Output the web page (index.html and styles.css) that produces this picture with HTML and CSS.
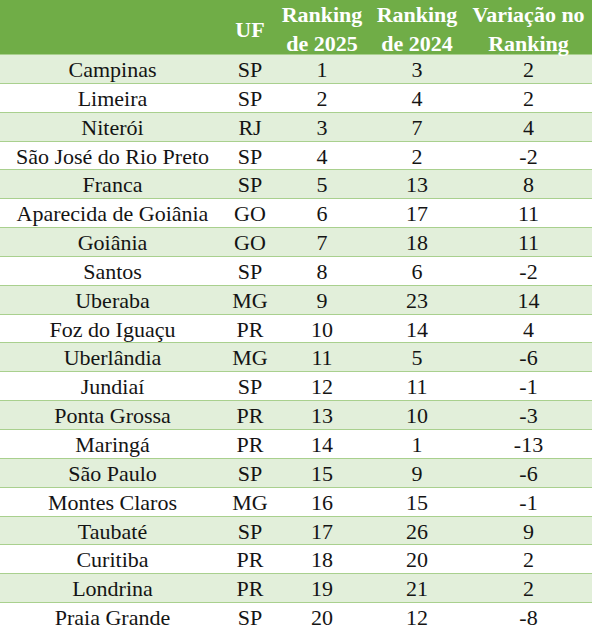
FILE: index.html
```html
<!DOCTYPE html>
<html lang="pt-BR">
<head>
<meta charset="utf-8">
<title>Ranking das cidades</title>
<link rel="stylesheet" href="styles.css">
</head>
<body>
<div class="sheet">
  <div class="hrow">
    <div class="hcell"></div>
    <div class="hcell">UF</div>
    <div class="hcell">Ranking<br>de 2025</div>
    <div class="hcell">Ranking<br>de 2024</div>
    <div class="hcell">Variação no<br>Ranking</div>
  </div>
  <div class="drow shade"><span>Campinas</span><span>SP</span><span>1</span><span>3</span><span>2</span></div>
  <div class="drow"><span>Limeira</span><span>SP</span><span>2</span><span>4</span><span>2</span></div>
  <div class="drow shade"><span>Niterói</span><span>RJ</span><span>3</span><span>7</span><span>4</span></div>
  <div class="drow"><span>São José do Rio Preto</span><span>SP</span><span>4</span><span>2</span><span>-2</span></div>
  <div class="drow shade"><span>Franca</span><span>SP</span><span>5</span><span>13</span><span>8</span></div>
  <div class="drow"><span>Aparecida de Goiânia</span><span>GO</span><span>6</span><span>17</span><span>11</span></div>
  <div class="drow shade"><span>Goiânia</span><span>GO</span><span>7</span><span>18</span><span>11</span></div>
  <div class="drow"><span>Santos</span><span>SP</span><span>8</span><span>6</span><span>-2</span></div>
  <div class="drow shade"><span>Uberaba</span><span>MG</span><span>9</span><span>23</span><span>14</span></div>
  <div class="drow"><span>Foz do Iguaçu</span><span>PR</span><span>10</span><span>14</span><span>4</span></div>
  <div class="drow shade"><span>Uberlândia</span><span>MG</span><span>11</span><span>5</span><span>-6</span></div>
  <div class="drow"><span>Jundiaí</span><span>SP</span><span>12</span><span>11</span><span>-1</span></div>
  <div class="drow shade"><span>Ponta Grossa</span><span>PR</span><span>13</span><span>10</span><span>-3</span></div>
  <div class="drow"><span>Maringá</span><span>PR</span><span>14</span><span>1</span><span>-13</span></div>
  <div class="drow shade"><span>São Paulo</span><span>SP</span><span>15</span><span>9</span><span>-6</span></div>
  <div class="drow"><span>Montes Claros</span><span>MG</span><span>16</span><span>15</span><span>-1</span></div>
  <div class="drow shade"><span>Taubaté</span><span>SP</span><span>17</span><span>26</span><span>9</span></div>
  <div class="drow"><span>Curitiba</span><span>PR</span><span>18</span><span>20</span><span>2</span></div>
  <div class="drow shade"><span>Londrina</span><span>PR</span><span>19</span><span>21</span><span>2</span></div>
  <div class="drow last"><span>Praia Grande</span><span>SP</span><span>20</span><span>12</span><span>-8</span></div>
</div>
</body>
</html>
```

FILE: styles.css
```css
html, body {
  margin: 0;
  padding: 0;
  background: #ffffff;
}

body {
  overflow: hidden;
}

.sheet {
  width: 592px;
  font-family: "Liberation Serif", serif;
  font-size: 22px;
  color: #141414;
}

.hrow,
.drow {
  display: grid;
  grid-template-columns: 225px 50px 94px 96px 127px;
}

.hrow {
  background: #70ad47;
  height: 55px;
  border-bottom: 1px solid #a9d08e;
  box-sizing: border-box;
}

.hcell {
  display: flex;
  align-items: center;
  justify-content: center;
  padding-bottom: 4px;
  text-align: center;
  color: #ffffff;
  font-weight: bold;
  line-height: 29px;
  white-space: nowrap;
}

.drow {
  height: 28.85px;
  box-sizing: border-box;
  border-bottom: 1px solid #a9d08e;
  padding-top: 2px;
  line-height: 26px;
}

.drow.last {
  border-bottom: none;
}

.drow.shade {
  background: #e2efda;
}

.drow span {
  text-align: center;
  white-space: nowrap;
}
```
